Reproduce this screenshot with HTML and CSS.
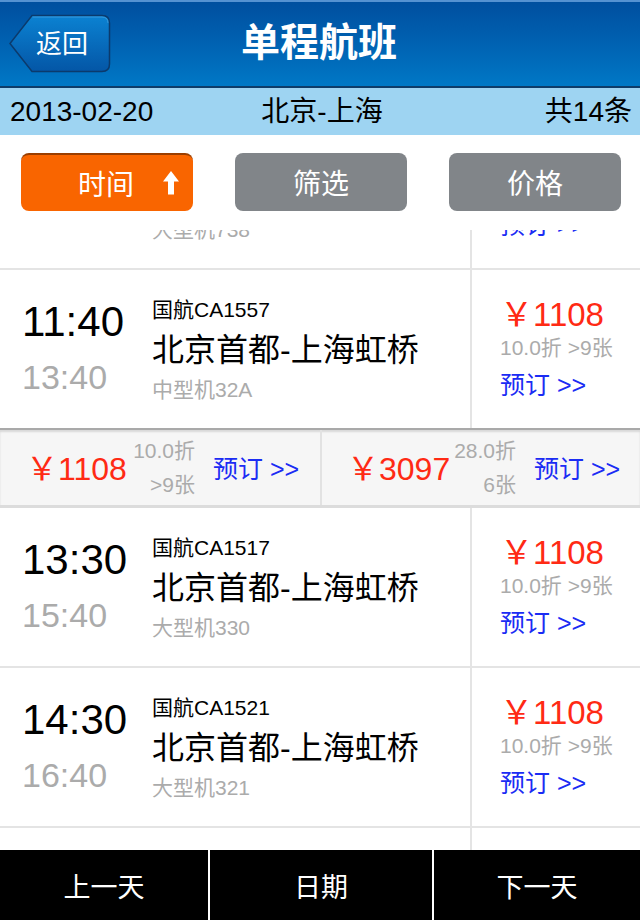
FILE: index.html
```html
<!DOCTYPE html>
<html lang="zh-CN">
<head>
<meta charset="utf-8">
<title>单程航班</title>
<link rel="stylesheet" href="styles.css">
</head>
<body>
<div class="app">
  <header class="nav">
    <div class="back">
      <svg class="back-shape" width="102" height="60" viewBox="0 0 102 60">
        <defs>
          <linearGradient id="bg" x1="0" y1="0" x2="0" y2="1">
            <stop offset="0" stop-color="#0b82d2"/>
            <stop offset="1" stop-color="#0456a6"/>
          </linearGradient>
        </defs>
        <path d="M23 1.5 H93 Q100.5 1.5 100.5 9 V50 Q100.5 57.5 93 57.5 H23 L1 29.5 Z" fill="url(#bg)" stroke="#0b3a6c" stroke-width="1.5"/>
        <path d="M23.5 3 H93 Q99 3 99 9" fill="none" stroke="#4aa6e6" stroke-width="1" opacity="0.7"/>
      </svg>
      <span class="back-text">返回</span>
    </div>
    <h1 class="title">单程航班</h1>
  </header>
  <div class="summary">
    <span class="sum-date">2013-02-20</span>
    <span class="sum-route">北京-上海</span>
    <span class="sum-count">共14条</span>
  </div>
  <div class="filters">
    <div class="fbtn fbtn-active">
      <span>时间</span>
      <svg class="up" width="16" height="24" viewBox="0 0 16 24"><path d="M8 0 L16 10.5 H11 V23.5 H5 V10.5 H0 Z" fill="#fff"/></svg>
    </div>
    <div class="fbtn">筛选</div>
    <div class="fbtn">价格</div>
  </div>
  <div class="list">
    <div class="list-inner">
      <div class="flight">
        <div class="flight-main">
          <div class="times"><div class="dep">10:40</div><div class="arr">12:50</div></div>
          <div class="info"><div class="code">东航MU5138</div><div class="route">北京首都-上海虹桥</div><div class="plane">大型机738</div></div>
        </div>
        <div class="flight-side"><div class="price">￥1108</div><div class="meta">10.0折 &gt;9张</div><div class="book">预订 &gt;&gt;</div></div>
      </div>
      <div class="flight flight-open">
        <div class="flight-main">
          <div class="times"><div class="dep">11:40</div><div class="arr">13:40</div></div>
          <div class="info"><div class="code">国航CA1557</div><div class="route">北京首都-上海虹桥</div><div class="plane">中型机32A</div></div>
        </div>
        <div class="flight-side"><div class="price">￥1108</div><div class="meta">10.0折 &gt;9张</div><div class="book">预订 &gt;&gt;</div></div>
      </div>
      <div class="cabins">
        <div class="cabin">
          <div class="c-price">￥1108</div>
          <div class="c-meta"><div>10.0折</div><div>&gt;9张</div></div>
          <div class="c-book">预订 &gt;&gt;</div>
        </div>
        <div class="cabin">
          <div class="c-price">￥3097</div>
          <div class="c-meta"><div>28.0折</div><div>6张</div></div>
          <div class="c-book">预订 &gt;&gt;</div>
        </div>
      </div>
      <div class="flight">
        <div class="flight-main">
          <div class="times"><div class="dep">13:30</div><div class="arr">15:40</div></div>
          <div class="info"><div class="code">国航CA1517</div><div class="route">北京首都-上海虹桥</div><div class="plane">大型机330</div></div>
        </div>
        <div class="flight-side"><div class="price">￥1108</div><div class="meta">10.0折 &gt;9张</div><div class="book">预订 &gt;&gt;</div></div>
      </div>
      <div class="flight">
        <div class="flight-main">
          <div class="times"><div class="dep">14:30</div><div class="arr">16:40</div></div>
          <div class="info"><div class="code">国航CA1521</div><div class="route">北京首都-上海虹桥</div><div class="plane">大型机321</div></div>
        </div>
        <div class="flight-side"><div class="price">￥1108</div><div class="meta">10.0折 &gt;9张</div><div class="book">预订 &gt;&gt;</div></div>
      </div>
      <div class="flight">
        <div class="flight-main">
          <div class="times"><div class="dep">15:30</div><div class="arr">17:40</div></div>
          <div class="info"><div class="code">国航CA1531</div><div class="route">北京首都-上海虹桥</div><div class="plane">大型机330</div></div>
        </div>
        <div class="flight-side"><div class="price">￥1108</div><div class="meta">10.0折 &gt;9张</div><div class="book">预订 &gt;&gt;</div></div>
      </div>
    </div>
  </div>
  <footer class="tabbar">
    <div class="tab">上一天</div>
    <div class="tab">日期</div>
    <div class="tab">下一天</div>
  </footer>
</div>
</body>
</html>
```
FILE: styles.css
```css
* { box-sizing: border-box; margin: 0; padding: 0; }
html, body { width: 640px; height: 920px; overflow: hidden; }
body {
  font-family: "Liberation Sans", "Noto Sans CJK SC", sans-serif;
  background: #fff;
  color: #000;
}
.app { width: 640px; height: 920px; display: flex; flex-direction: column; }

.nav {
  height: 88px;
  flex: none;
  display: flex;
  align-items: center;
  justify-content: center;
  border-top: 2px solid #5592d2;
  border-bottom: 2px solid #0e3c69;
  background: linear-gradient(#004f9f, #0062b2 50%, #0078c6);
  position: relative;
}
.back {
  position: absolute;
  left: 9px;
  top: 12px;
  width: 102px;
  height: 60px;
}
.back-shape { display: block; }
.back-text {
  position: absolute;
  left: 27px;
  top: 0;
  height: 60px;
  line-height: 60px;
  font-size: 26px;
  color: #fff;
}
.title {
  font-size: 39px;
  font-weight: bold;
  color: #fff;
  line-height: 44px;
  margin-left: -2px;
  margin-top: -2px;
}

.summary {
  height: 47px;
  flex: none;
  background: #9ed4f2;
  display: grid;
  grid-template-columns: 1fr auto 1fr;
  align-items: center;
  padding: 0 8px 0 10px;
  font-size: 28px;
  line-height: 32px;
}
.sum-route { margin-left: 2px; }
.sum-count { justify-self: end; }

.filters {
  height: 95px;
  flex: none;
  display: flex;
  gap: 42px;
  padding: 18px 0 0 21px;
  background: #fff;
}
.fbtn {
  width: 172px;
  height: 58px;
  border-radius: 8px;
  background: #818589;
  color: #fff;
  font-size: 28px;
  display: flex;
  align-items: center;
  justify-content: center;
}
.fbtn-active {
  background: #f96500;
  border-top: 2px solid #9a3e00;
  justify-content: flex-start;
  padding-left: 57px;
}
.up { margin-left: 29px; display: block; }

.list {
  height: 620px;
  flex: none;
  overflow: hidden;
  background: #fff;
}
.list-inner { margin-top: -120px; }

.flight {
  display: flex;
  height: 160px;
  border-bottom: 2px solid #e4e4e4;
}
.flight-open { height: 158px; border-bottom: none; }
.flight-main {
  width: 472px;
  border-right: 2px solid #e4e4e4;
  display: flex;
  padding-left: 22px;
}
.times { width: 130px; padding-top: 31px; }
.dep { font-size: 42px; line-height: 42px; }
.arr { margin-top: 17px; font-size: 34px; line-height: 34px; color: #ababab; }
.info { padding-top: 28px; white-space: nowrap; }
.code { font-size: 21px; line-height: 24px; }
.route { margin-top: 10px; font-size: 32px; line-height: 36px; }
.plane { margin-top: 10px; font-size: 21px; line-height: 24px; color: #ababab; }

.flight-side { padding: 26px 0 0 28px; white-space: nowrap; }
.price { font-size: 33px; line-height: 38px; color: #ff2a14; }
.meta { margin-top: 2px; font-size: 21px; line-height: 24px; color: #ababab; }
.book { margin-top: 10px; font-size: 25px; line-height: 30px; color: #1b2cf4; }

.cabins {
  height: 80px;
  display: flex;
  background: #f6f6f6;
  border-top: 2px solid #a9a9a9;
  border-bottom: 3px solid #dcdcdc;
  box-shadow: inset 0 2px 2px rgba(0, 0, 0, 0.12);
}
.cabin {
  width: 320px;
  display: flex;
  align-items: center;
  padding-left: 26px;
  white-space: nowrap;
}
.cabin + .cabin { border-left: 2px solid #e2e2e2; width: 320px; padding-left: 25px; }
.c-price { width: 100px; font-size: 32px; line-height: 38px; color: #ff2a14; margin-top: 2px; }
.c-meta { width: 69px; text-align: right; font-size: 21px; line-height: 34px; color: #ababab; }
.c-book { margin-left: 18px; font-size: 25px; line-height: 30px; color: #1b2cf4; margin-top: 2px; }

.tabbar {
  height: 70px;
  flex: none;
  display: grid;
  grid-template-columns: 208px 222px 1fr;
  gap: 2px;
  background: #fff;
}
.tab {
  background: #000;
  color: #fff;
  font-size: 27px;
  display: flex;
  align-items: center;
  justify-content: center;
}
```
